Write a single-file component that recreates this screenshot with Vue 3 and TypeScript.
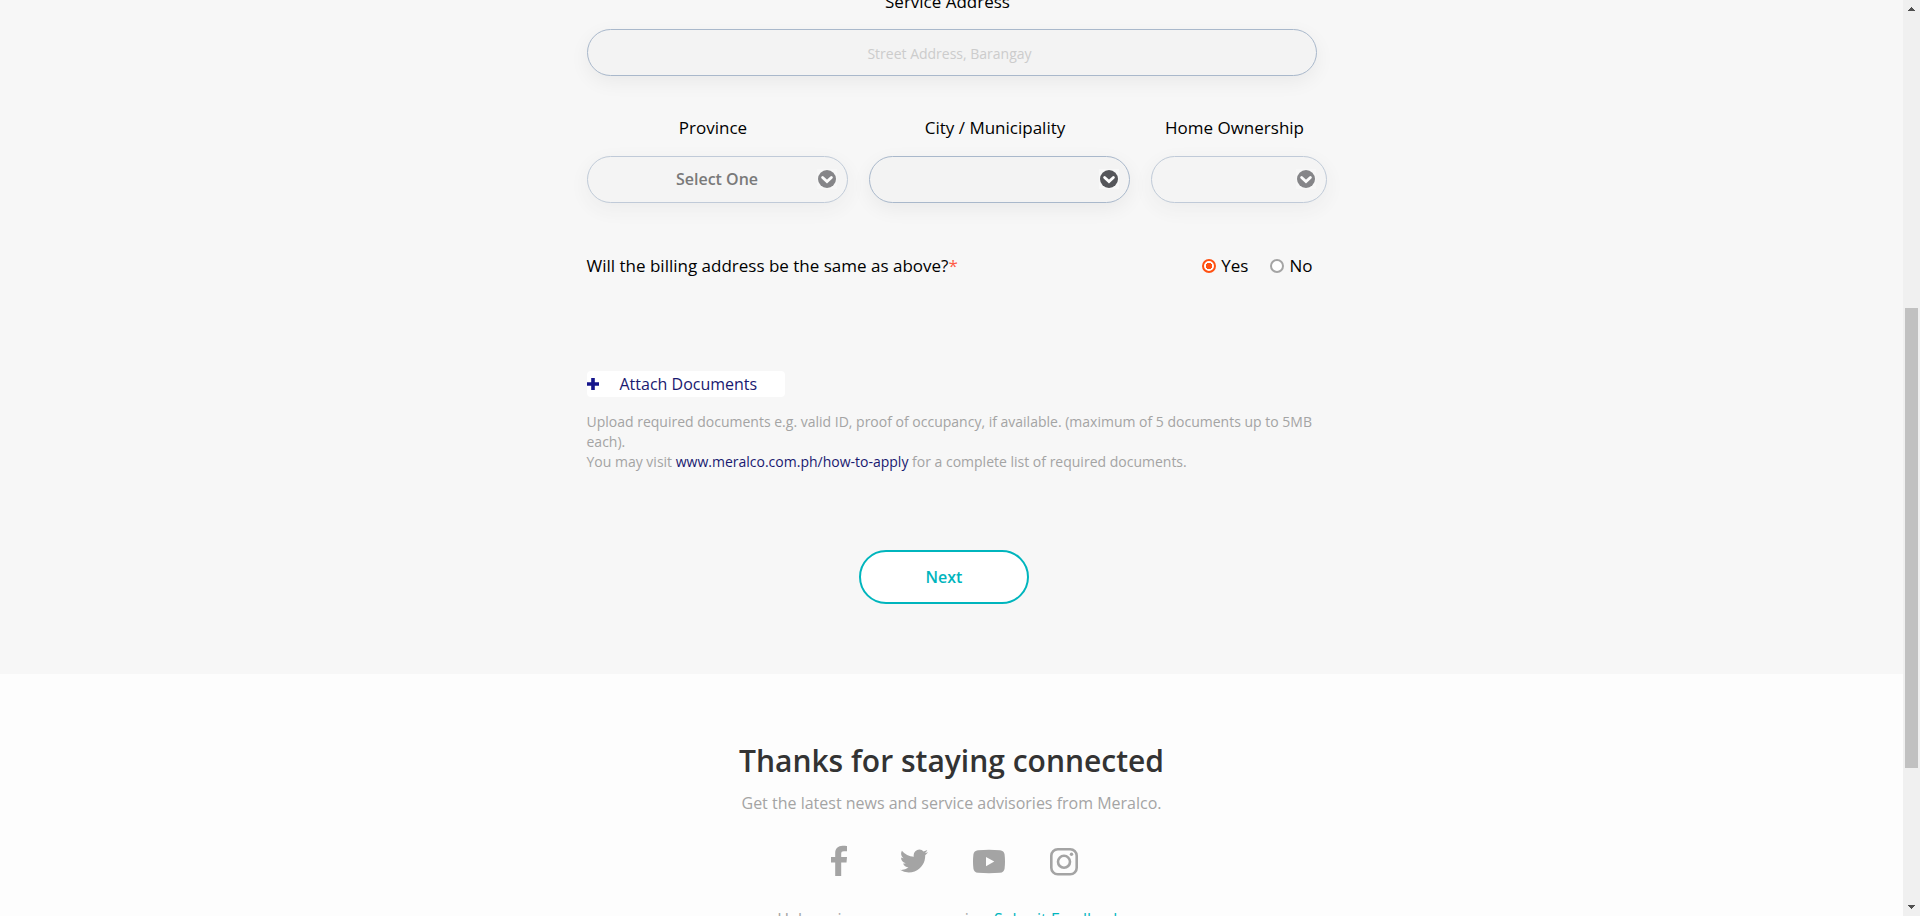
<script setup lang="ts">
import { ref } from 'vue'

interface SelectField {
  id: string
  label: string
  placeholder: string
  disabled: boolean
}

const fields: SelectField[] = [
  { id: 'province', label: 'Province', placeholder: 'Select One', disabled: true },
  { id: 'city', label: 'City / Municipality', placeholder: '', disabled: false },
  { id: 'ownership', label: 'Home Ownership', placeholder: '', disabled: true },
]

const address = ref('')
const sameBilling = ref('yes')
</script>

<template>
  <div class="window">
    <div class="page">
      <main class="form-section">
        <form class="form" @submit.prevent>
          <label class="field-label" for="address">Service Address</label>
          <input id="address" v-model="address" class="pill address" type="text" placeholder="Street Address, Barangay" />

          <div class="selects">
            <div v-for="f in fields" :key="f.id" class="field">
              <label class="field-label" :for="f.id">{{ f.label }}</label>
              <div class="select-wrap" :class="{ disabled: f.disabled }">
                <select :id="f.id" class="pill" :disabled="f.disabled">
                  <option>{{ f.placeholder }}</option>
                </select>
                <svg class="chevron" viewBox="0 0 20 20" aria-hidden="true">
                  <rect width="20" height="20" fill="#f8f8f8" />
                  <circle cx="10" cy="10" r="9" fill="#55565a" />
                  <path d="M5.6 8.4 10 12.6l4.4-4.2" fill="none" stroke="#fff" stroke-width="2.8" stroke-linecap="round" />
                </svg>
              </div>
            </div>
          </div>

          <fieldset class="billing" aria-labelledby="billing-question">
            <span id="billing-question">Will the billing address be the same as above?<span class="required">*</span></span>
            <span class="options">
              <label class="radio"><input v-model="sameBilling" type="radio" name="billing" value="yes" />Yes</label>
              <label class="radio"><input v-model="sameBilling" type="radio" name="billing" value="no" />No</label>
            </span>
          </fieldset>

          <button class="attach" type="button">
            <svg viewBox="0 0 12 12" width="12" height="12" aria-hidden="true">
              <path d="M4.200 0h3.600v4.200H12v3.600H7.800V12H4.200V7.800H0V4.200h4.200z" fill="#15158c" />
            </svg>
            <span>Attach Documents</span>
          </button>
          <p class="hint">
            Upload required documents e.g. valid ID, proof of occupancy, if available. (maximum of 5 documents up to 5MB each).<br />
            You may visit <a href="#how-to-apply">www.meralco.com.ph/how-to-apply</a> for a complete list of required documents.
          </p>

          <div class="actions">
            <button class="next" type="submit">Next</button>
          </div>
        </form>
      </main>

      <footer class="footer">
        <h2>Thanks for staying connected</h2>
        <p>Get the latest news and service advisories from Meralco.</p>
        <nav class="social" aria-label="Social media">
          <a href="#facebook" aria-label="Facebook">
            <svg viewBox="0 0 32 32"><path d="M24 1v5.200h-3.200c-1.900 0-2.600.8-2.600 2.500v3.400H24l-.5 5.500h-5.300V31h-6V17.600H8v-5.500h4.200V8.300C12.200 3.600 15 .8 19.600.8c1.800 0 3.400.1 4.400.2z" /></svg>
          </a>
          <a href="#twitter" aria-label="Twitter">
            <svg viewBox="0 0 1792 1792"><path d="M1684 408q-67 98-162 167 1 14 1 42 0 130-38 259.500t-115.500 248.500-184.500 210.500-258 146-323 54.500q-271 0-496-145 35 4 78 4 225 0 401-138-105-2-188-64.500t-114-159.500q33 5 61 5 43 0 85-11-112-23-185.500-111.500t-73.500-205.500v-4q68 38 146 41-66-44-105-115t-39-154q0-88 44-163 121 149 294.500 238.500t371.500 99.500q-8-38-8-74 0-134 94.500-228.500t228.500-94.500q140 0 236 102 109-21 205-78-37 115-142 178 93-10 186-50z" /></svg>
          </a>
          <a href="#youtube" aria-label="YouTube">
            <svg viewBox="0 0 32 32"><path fill-rule="evenodd" d="M5 5.300Q16 4.300 27 5.300Q31 5.600 31.600 9.500Q32.400 16.500 31.600 23.500Q31 27.500 27 27.800Q16 28.700 5 27.800Q1 27.500.4 23.500Q-.4 16.500.4 9.500Q1 5.600 5 5.300zM13 12v9.200l8.300-4.600z" /></svg>
          </a>
          <a href="#instagram" aria-label="Instagram">
            <svg viewBox="0 0 32 32"><rect x="3.300" y="4.300" width="25.400" height="25" rx="6.500" fill="none" stroke="#a4a4a4" stroke-width="2.600" /><circle cx="16" cy="16.800" r="6" fill="none" stroke="#a4a4a4" stroke-width="2.600" /><circle cx="23.500" cy="9.300" r="1.700" /></svg>
          </a>
        </nav>
        <p class="feedback">Help us improve our service. <a href="#feedback">Submit Feedback</a></p>
      </footer>
    </div>

    <div class="scrollbar" aria-hidden="true">
      <svg class="arrow" viewBox="0 0 17 17" shape-rendering="crispEdges"><path d="M5 11h7v-1h-1V9h-1V8H9V7H8v1H7v1H6v1H5z" fill="#505050" /></svg>
      <div class="above"></div>
      <div class="thumb"></div>
      <div class="below"></div>
      <svg class="arrow" viewBox="0 0 17 17" shape-rendering="crispEdges"><path d="M5 6h7v1h-1v1h-1v1H9v1H8V9H7V8H6V7H5z" fill="#505050" /></svg>
    </div>
  </div>
</template>

<style>
body {
  margin: 0;
}
</style>

<style scoped>
* {
  box-sizing: border-box;
}
.window {
  display: flex;
  height: 100vh;
  overflow: hidden;
  font-family: "Open Sans", "Noto Sans", sans-serif;
  font-size: 17px;
  line-height: 24px;
  color: #000;
}
.page {
  flex: 1;
  min-width: 0;
  background: #fdfdfd;
}
.form-section {
  padding: 0 16px 70px;
  margin-top: -10px;
  background: #f7f7f7;
}
.form {
  width: 100%;
  max-width: 730px;
  margin: 0 auto;
}
.field-label {
  display: block;
  padding-right: 8px;
  margin-bottom: 15px;
  text-align: center;
}
.selects .field-label {
  margin-bottom: 16px;
}
.pill {
  display: block;
  width: 100%;
  height: 47px;
  padding: 0 48px 2px;
  border: 1px solid #a9b8cb;
  border-radius: 24px;
  background: #f3f3f3;
  box-shadow: 0 6px 20px rgba(0, 0, 0, 0.06);
  font: 600 16px/24px "Open Sans", "Noto Sans", sans-serif;
  color: #444;
  text-align: center;
  text-align-last: center;
  appearance: none;
  outline: none;
}
.pill:disabled {
  opacity: 1;
}
.address {
  padding: 2px 48px 0 44px;
  font-size: 14px;
  font-weight: 400;
}
.address::placeholder {
  color: #ccc;
}
.selects {
  display: grid;
  grid-template-columns: 261fr 261fr 176fr;
  column-gap: 21px;
  margin: 40px -10px 0 0;
}
.select-wrap {
  position: relative;
}
.select-wrap.disabled {
  opacity: 0.7;
}
.chevron {
  position: absolute;
  top: 13px;
  right: 11px;
  width: 20px;
  height: 20px;
  pointer-events: none;
}
.billing {
  display: flex;
  justify-content: space-between;
  padding: 0 4px 0 0;
  margin: 51px 0 0;
  border: 0;
}
.required {
  color: #ff5a45;
}
.options {
  display: flex;
  gap: 22px;
}
.radio {
  display: flex;
  align-items: center;
  gap: 5px;
}
.radio input {
  width: 14px;
  height: 14px;
  margin: 0;
  border: 2px solid #a4a4a4;
  border-radius: 50%;
  background: #fff;
  appearance: none;
}
.radio input:checked {
  border-color: #ff5112;
  background: radial-gradient(circle, #ff5112 3px, #fff 3px);
}
.attach {
  display: flex;
  align-items: center;
  gap: 21px;
  width: 198px;
  height: 26px;
  padding: 0;
  margin-top: 93px;
  border: 0;
  border-radius: 4px;
  background: #fff;
  font: 16px/24px "Open Sans", "Noto Sans", sans-serif;
  color: #191970;
}
.hint {
  margin: 15px 0 0;
  font-size: 14px;
  line-height: 20px;
  color: #a4a4a4;
}
.hint a {
  color: #191970;
  text-decoration: none;
}
.actions {
  display: flex;
  justify-content: center;
  padding-right: 15px;
  margin-top: 78px;
}
.next {
  width: 170px;
  height: 54px;
  border: 2px solid #00b5bd;
  border-radius: 27px;
  background: #fff;
  font: 600 16px/24px "Open Sans", "Noto Sans", sans-serif;
  color: #00b5bd;
}
.footer {
  padding: 67px 16px 0;
  font-size: 16px;
  color: #a4a4a4;
  text-align: center;
}
.footer h2 {
  margin: 0;
  font-size: 30px;
  font-weight: 600;
  line-height: 40px;
  color: #333;
}
.footer p {
  margin: 10px 0 0;
}
.social {
  display: flex;
  justify-content: center;
  gap: 43px;
  margin-top: 30px;
}
.social a {
  width: 32px;
  height: 32px;
}
.social svg {
  display: block;
  width: 32px;
  height: 32px;
  fill: #a4a4a4;
}
.footer .feedback {
  padding-right: 4px;
  margin-top: 30px;
}
.feedback a {
  color: #00b5bd;
  text-decoration: none;
}
.scrollbar {
  display: flex;
  flex-direction: column;
  width: 17px;
  padding: 0 2px;
  background: #f0f0f0;
}
.arrow {
  flex: none;
  width: 17px;
  height: 17px;
  margin: 0 -2px;
}
.above {
  flex: 291;
}
.thumb {
  flex: 460;
  background: #c1c1c1;
}
.below {
  flex: 131;
}
</style>
